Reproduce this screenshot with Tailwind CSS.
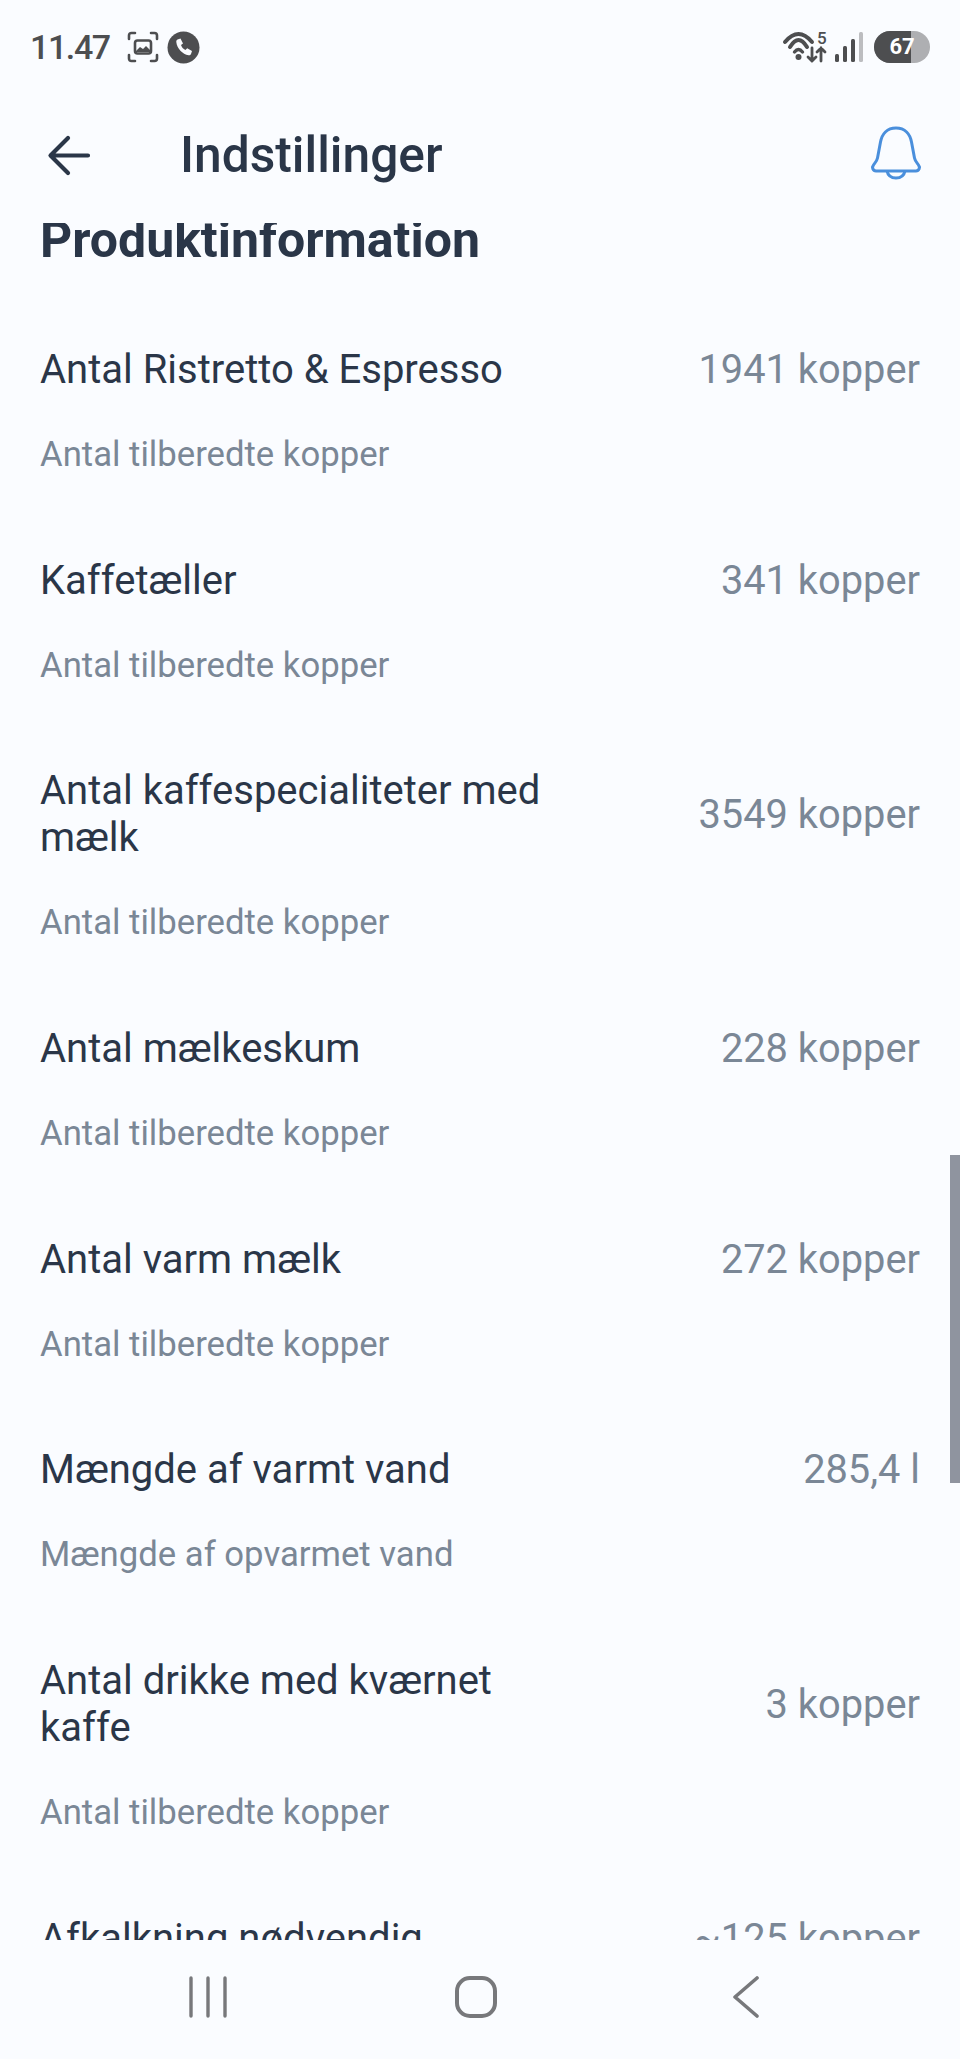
<!DOCTYPE html>
<html lang="en">
<head>
  <meta charset="UTF-8" />
  <meta name="viewport" content="width=device-width, initial-scale=1.0" />
  <title>Indstillinger</title>
  <script src="https://cdn.jsdelivr.net/npm/@tailwindcss/browser@4"></script>
</head>
<body class="bg-[#fafcff] font-['Roboto',sans-serif]">
  <div class="w-[960px] h-[2059px] flex flex-col overflow-hidden">
    <!-- status bar -->
    <div class="h-[94px] shrink-0 flex items-center justify-between pl-[30px] pr-[30px] text-[#4d4e50]">
      <div class="flex items-center">
        <span class="text-[34px] font-medium leading-none tracking-[-1.4px]">11.47</span>
        <svg class="ml-[17px]" width="32" height="32" viewBox="0 0 32 32" fill="none" stroke="currentColor" stroke-width="2.6" stroke-linecap="round">
          <path d="M2 8V4.5Q2 2 4.5 2H8M24 2h3.5Q30 2 30 4.5V8M30 24v3.500Q30 30 27.500 30H24M8 30H4.500Q2 30 2 27.500V24"/>
          <rect x="8" y="9.500" width="16" height="13" rx="2.500"/>
          <path d="M9 20l4-4 3 2 3-3 4 4v2H9z" fill="currentColor" stroke="none"/>
        </svg>
        <svg class="ml-[8px]" width="33" height="33" viewBox="0 0 33 33">
          <circle cx="16.500" cy="16.500" r="16" fill="currentColor"/>
          <path d="M10.500 8.500l3-1 2.500 5-2 1.600c.7 2.300 2.200 4 4.400 5l1.800-1.800 4.800 2.700-1 3c-.4 1-1.400 1.500-2.400 1.300C15.500 23 10 17.500 9.300 10.900c-.1-1 .3-2 1.200-2.400z" fill="#fafcff"/>
        </svg>
      </div>
      <div class="flex items-center">
        <svg class="overflow-visible" width="46" height="32" viewBox="0 0 46 32" fill="none" stroke="currentColor" stroke-linecap="round">
          <path d="M4 11Q17.500-5 31 11" stroke-width="4"/>
          <path d="M9 16Q17.500 2 26 16" stroke-width="4"/>
          <path d="M13.500 21Q17.500 16 21.500 21" stroke-width="3.400"/>
          <circle cx="17.500" cy="26" r="3" fill="currentColor" stroke="none"/>
          <path d="M31 17v13M27 26l4 4 4-4M40 30V17M36 21l4-4 4 4" stroke-width="2.800"/>
          <text x="36" y="13" font-size="17" font-weight="500" fill="currentColor" stroke="none" font-family="Roboto">5</text>
        </svg>
        <svg class="ml-[7px]" width="30" height="30" viewBox="0 0 30 30">
          <rect x="1" y="22" width="4" height="8" rx="1.500" fill="currentColor"/>
          <rect x="9" y="14" width="4" height="16" rx="1.500" fill="currentColor"/>
          <rect x="17" y="7" width="4" height="23" rx="1.500" fill="currentColor"/>
          <rect x="25" y="0" width="4" height="30" rx="1.500" fill="#bcbdc0"/>
        </svg>
        <div class="ml-[10px] relative w-[56px] h-[32px] rounded-full overflow-hidden bg-[#aeafb2] flex items-center justify-center">
          <div class="absolute left-0 top-0 bottom-0 w-[37px] bg-[#4d4e50]"></div>
          <span class="relative text-white text-[22px] font-bold leading-none">67</span>
        </div>
      </div>
    </div>

    <!-- header -->
    <div class="h-[129px] shrink-0 flex items-center pl-[47px] pr-[38px] pb-[5px] text-[#2a3648]">
      <svg width="44" height="42" viewBox="0 0 44 42" fill="none" stroke="currentColor" stroke-width="4.200" stroke-linecap="round" stroke-linejoin="round">
        <path d="M41 20.500H4M21 3L3.500 20.500 21 38"/>
      </svg>
      <h1 class="ml-[89px] text-[49.7px] font-medium leading-none">Indstillinger</h1>
      <svg class="ml-auto -mt-[6px]" width="52" height="54" viewBox="0 0 52 54" fill="none" stroke="#4a8fdc" stroke-width="3" stroke-linejoin="round">
        <path d="M26 2C17 2 12 8 10.500 16L7.500 32C7 35 5 37 3.500 39C1.500 41.500 3 45 6 45H46C49 45 50.500 41.500 48.500 39C47 37 45 35 44.500 32L41.500 16C40 8 35 2 26 2z"/>
        <path d="M17 45C18 50 22 52 26 52S34 50 35 45"/>
      </svg>
    </div>

    <!-- list -->
    <div class="relative flex-1 min-h-0 overflow-hidden">
      <div class="absolute right-0 top-[932px] w-[10px] h-[328px] bg-[#8f949f]"></div>
      <div class="px-[40px] -mt-[5px]">
        <h2 class="text-[50px] font-bold leading-[44px] text-[#2a3648]">Produktinformation</h2>

        <div class="mt-[84px] flex flex-col gap-[81.7px]">
          <div>
            <div class="flex items-center justify-between">
              <div class="w-[520px] text-[40px] leading-[47px] text-[#2a3648]">Antal Ristretto &amp; Espresso</div>
              <div class="text-[39.8px] leading-[47px] text-[#7a8796]">1941 kopper</div>
            </div>
            <div class="mt-[40px] text-[34.7px] leading-[42px] text-[#7a8796]">Antal tilberedte kopper</div>
          </div>
          <div>
            <div class="flex items-center justify-between">
              <div class="w-[520px] text-[40px] leading-[47px] text-[#2a3648]">Kaffetæller</div>
              <div class="text-[39.8px] leading-[47px] text-[#7a8796]">341 kopper</div>
            </div>
            <div class="mt-[40px] text-[34.7px] leading-[42px] text-[#7a8796]">Antal tilberedte kopper</div>
          </div>
          <div>
            <div class="flex items-center justify-between">
              <div class="w-[520px] text-[40px] leading-[47px] text-[#2a3648]">Antal kaffespecialiteter med mælk</div>
              <div class="text-[39.8px] leading-[47px] text-[#7a8796]">3549 kopper</div>
            </div>
            <div class="mt-[40px] text-[34.7px] leading-[42px] text-[#7a8796]">Antal tilberedte kopper</div>
          </div>
          <div>
            <div class="flex items-center justify-between">
              <div class="w-[520px] text-[40px] leading-[47px] text-[#2a3648]">Antal mælkeskum</div>
              <div class="text-[39.8px] leading-[47px] text-[#7a8796]">228 kopper</div>
            </div>
            <div class="mt-[40px] text-[34.7px] leading-[42px] text-[#7a8796]">Antal tilberedte kopper</div>
          </div>
          <div>
            <div class="flex items-center justify-between">
              <div class="w-[520px] text-[40px] leading-[47px] text-[#2a3648]">Antal varm mælk</div>
              <div class="text-[39.8px] leading-[47px] text-[#7a8796]">272 kopper</div>
            </div>
            <div class="mt-[40px] text-[34.7px] leading-[42px] text-[#7a8796]">Antal tilberedte kopper</div>
          </div>
          <div>
            <div class="flex items-center justify-between">
              <div class="w-[520px] text-[40px] leading-[47px] text-[#2a3648]">Mængde af varmt vand</div>
              <div class="text-[39.8px] leading-[47px] text-[#7a8796]">285,4 l</div>
            </div>
            <div class="mt-[40px] text-[34.7px] leading-[42px] text-[#7a8796]">Mængde af opvarmet vand</div>
          </div>
          <div>
            <div class="flex items-center justify-between">
              <div class="w-[520px] text-[40px] leading-[47px] text-[#2a3648]">Antal drikke med kværnet kaffe</div>
              <div class="text-[39.8px] leading-[47px] text-[#7a8796]">3 kopper</div>
            </div>
            <div class="mt-[40px] text-[34.7px] leading-[42px] text-[#7a8796]">Antal tilberedte kopper</div>
          </div>
          <div>
            <div class="flex items-center justify-between">
              <div class="w-[520px] text-[40px] leading-[47px] text-[#2a3648]">Afkalkning nødvendig</div>
              <div class="text-[39.8px] leading-[47px] text-[#7a8796]">~125 kopper</div>
            </div>
          </div>
        </div>
      </div>
    </div>

    <!-- nav bar -->
    <div class="h-[119px] shrink-0 relative text-[#77787b]">
      <svg class="absolute left-[188px] top-[36px]" width="40" height="42" viewBox="0 0 40 42" fill="none" stroke="currentColor" stroke-width="3.400" stroke-linecap="round">
        <path d="M3 2v38M20 2v38M37 2v38"/>
      </svg>
      <svg class="absolute left-[455px] top-[36px]" width="42" height="42" viewBox="0 0 42 42" fill="none" stroke="currentColor" stroke-width="4">
        <rect x="2" y="2" width="38" height="38" rx="13"/>
      </svg>
      <svg class="absolute left-[732px] top-[36px]" width="28" height="42" viewBox="0 0 28 42" fill="none" stroke="currentColor" stroke-width="3.600" stroke-linecap="round" stroke-linejoin="round">
        <path d="M25 2L3 21l22 19"/>
      </svg>
    </div>
  </div>
</body>
</html>
